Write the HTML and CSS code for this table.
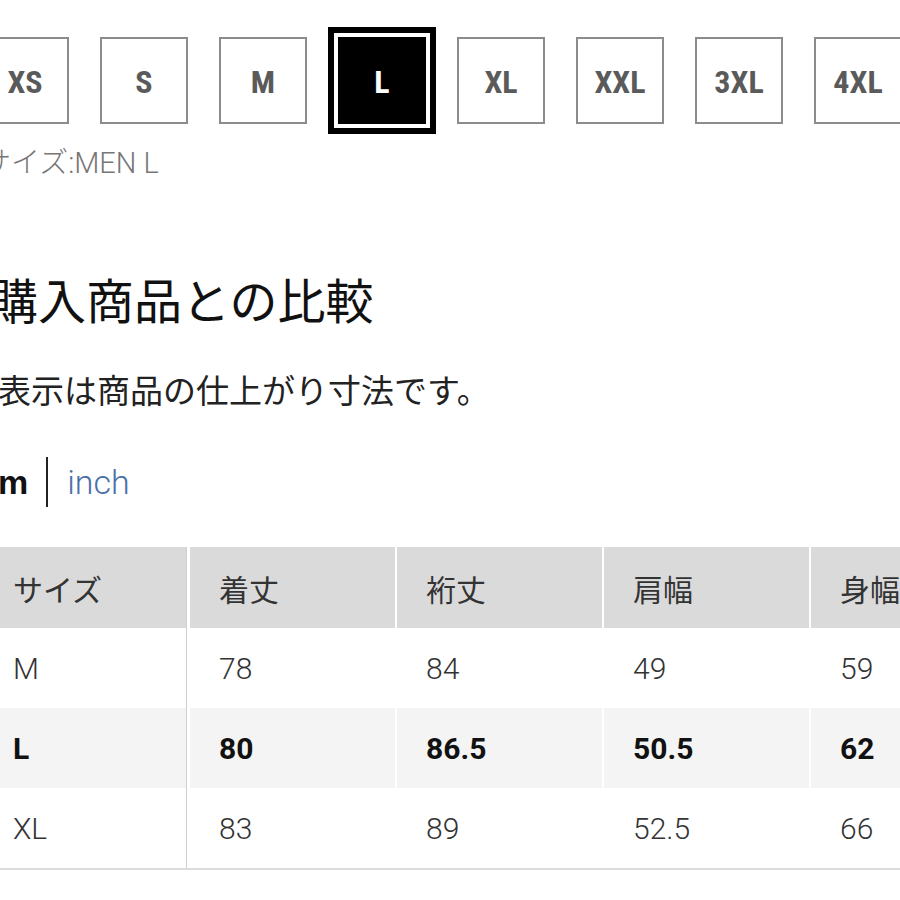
FILE: index.html
```html
<!DOCTYPE html>
<html lang="ja">
<head>
<meta charset="utf-8">
<title>サイズ比較</title>
<link rel="stylesheet" href="styles.css">
</head>
<body>
<div class="page">
  <div class="sizes">
    <div class="size">XS</div>
    <div class="size">S</div>
    <div class="size">M</div>
    <div class="size selected">L</div>
    <div class="size">XL</div>
    <div class="size">XXL</div>
    <div class="size">3XL</div>
    <div class="size">4XL</div>
  </div>
  <p class="chosen">サイズ:MEN L</p>
  <h2 class="heading">購入商品との比較</h2>
  <p class="note">表示は商品の仕上がり寸法です。</p>
  <div class="units">
    <span class="unit active">cm</span>
    <span class="divider"></span>
    <span class="unit link">inch</span>
  </div>
  <table class="chart">
    <colgroup>
      <col class="c1"><col class="c2"><col class="cn"><col class="cn"><col class="cn">
    </colgroup>
    <thead>
      <tr><th class="first">サイズ</th><th class="second">着丈</th><th>裄丈</th><th>肩幅</th><th>身幅</th></tr>
    </thead>
    <tbody>
      <tr><td class="first">M</td><td class="second">78</td><td>84</td><td>49</td><td>59</td></tr>
      <tr class="current"><td class="first">L</td><td class="second">80</td><td>86.5</td><td>50.5</td><td>62</td></tr>
      <tr><td class="first">XL</td><td class="second">83</td><td>89</td><td>52.5</td><td>66</td></tr>
    </tbody>
  </table>
</div>
</body>
</html>
```

FILE: styles.css
```css
html, body {
  margin: 0;
  padding: 0;
  background: #fff;
  overflow: hidden;
}

body {
  font-family: Roboto, "Noto Sans CJK JP", sans-serif;
  color: #222;
}

.page {
  width: 1100px;
  margin-left: -19px;
  padding-top: 37px;
}

.sizes {
  display: flex;
  gap: 31px;
}

.size {
  box-sizing: border-box;
  width: 88px;
  height: 87px;
  border: 2px solid #8c8c8c;
  display: flex;
  align-items: center;
  justify-content: center;
  font-family: "Liberation Sans Narrow", "Roboto Condensed", Roboto, sans-serif;
  font-weight: 700;
  font-size: 32px;
  color: #5a5a5a;
  padding-top: 2px;
}

.size.selected {
  background: #000;
  border-color: #000;
  color: #fff;
  box-shadow: 0 0 0 4px #fff, 0 0 0 10px #000;
}

.chosen {
  margin: 23px 0 0 1px;
  font-size: 29px;
  line-height: 32px;
  font-weight: 300;
  color: #777;
}

.heading {
  margin: 90px 0 0 9px;
  font-family: "Noto Sans CJK JP", sans-serif;
  font-weight: 400;
  font-size: 48px;
  line-height: 58px;
  color: #111;
}

.note {
  margin: 42px 0 0 17px;
  font-family: "Noto Sans CJK JP", sans-serif;
  font-size: 33px;
  line-height: 40px;
  color: #222;
}

.units {
  margin: 48px 0 0 0;
  display: flex;
  align-items: center;
  height: 50px;
  font-size: 34px;
}

.unit.active {
  font-family: "Liberation Sans", Arial, sans-serif;
  font-weight: 700;
  color: #111;
  margin-left: -2px;
}

.divider {
  width: 2px;
  height: 50px;
  background: #222;
  margin: 0 19px 0 18px;
}

.unit.link {
  font-family: Roboto, sans-serif;
  font-weight: 300;
  color: #4a70a8;
}

.chart {
  margin: 40px 0 0 2px;
  border-collapse: separate;
  border-spacing: 0;
  table-layout: fixed;
  width: 1033px;
  border-bottom: 2px solid #dcdcdc;
}

.chart .c1 { width: 204px; }
.chart .c2 { width: 208px; }
.chart .cn { width: 207px; }

.chart th,
.chart td {
  box-sizing: border-box;
  padding: 0 0 0 29px;
  text-align: left;
  border-left: 2px solid #fff;
  font-size: 30px;
  color: #333;
  white-space: nowrap;
}

.chart th {
  height: 81px;
  background: #dadada;
  font-family: "Noto Sans CJK JP", sans-serif;
  font-weight: 400;
}

.chart td {
  height: 80px;
  font-weight: 300;
}

.chart .first {
  border-left: 0;
  border-right: 1px solid #cfcfcf;
  padding-left: 30px;
}

.chart .second {
  border-left-width: 3px;
}

.chart .current td {
  background: #f4f4f4;
  font-weight: 700;
  color: #111;
}
```
